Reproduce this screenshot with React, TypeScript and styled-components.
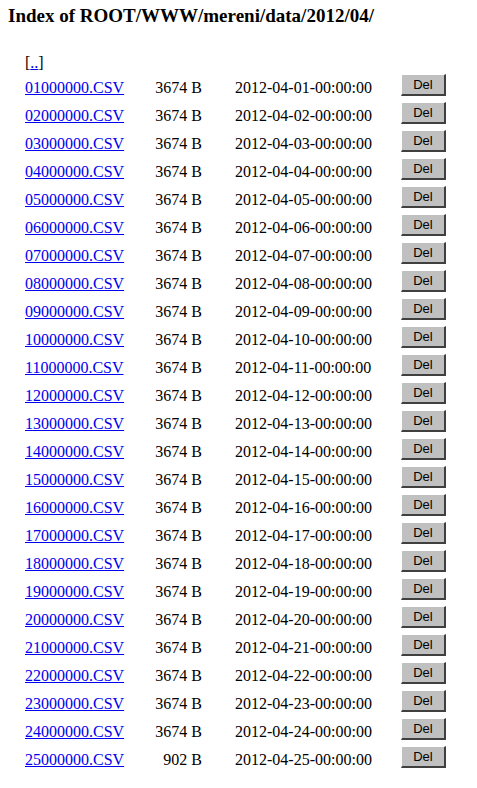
import React from "react";
import styled, { createGlobalStyle } from "styled-components";

const Global = createGlobalStyle`
  html, body { margin: 0; padding: 0; background: #fff; }
  body { font-family: "Liberation Serif", "Times New Roman", serif; font-size: 16px; color: #000; }
`;

const Page = styled.div`
  padding: 5px 8px 20px 8px;
`;

const Title = styled.h3`
  margin: 0;
  font-size: 19px;
  line-height: 22px;
  font-weight: bold;
`;

const Listing = styled.div`
  display: flex;
  flex-direction: column;
  margin-top: 25px;
  padding-left: 17px;
`;

const Row = styled.div<{ $short?: boolean }>`
  display: grid;
  grid-template-columns: 125px 52px 199px 45px;
  align-items: center;
  height: ${(p) => (p.$short ? 22 : 28)}px;
  line-height: 18px;
`;

const NameLink = styled.a`
  color: #0000ee;
  text-decoration: underline;
  white-space: nowrap;
`;

const Size = styled.span`
  text-align: right;
  white-space: nowrap;
`;

const DateCell = styled.span`
  padding-left: 33px;
  white-space: nowrap;
`;

const DelButton = styled.button`
  width: 45px;
  height: 22px;
  margin-top: -6px;
  padding: 0;
  background: #c0c0c0;
  border-style: solid;
  border-width: 1px 2px 2px 1px;
  border-color: #ffffff #404040 #404040 #ffffff;
  font-family: "Liberation Sans", Arial, sans-serif;
  font-size: 13px;
  color: #000;
  cursor: pointer;
`;

type Entry = { name: string; size: string; date: string };

const entries: Entry[] = Array.from({ length: 25 }, (_, i) => {
  const n = String(i + 1).padStart(2, "0");
  return {
    name: `${n}000000.CSV`,
    size: i === 24 ? "902 B" : "3674 B",
    date: `2012-04-${n}-00:00:00`,
  };
});

export default function App() {
  return (
    <Page>
      <Global />
      <Title>Index of ROOT/WWW/mereni/data/2012/04/</Title>
      <Listing>
        <Row $short>
          <span>
            [<NameLink href="#">..</NameLink>]
          </span>
        </Row>
        {entries.map((e) => (
          <Row key={e.name}>
            <NameLink href="#">{e.name}</NameLink>
            <Size>{e.size}</Size>
            <DateCell>{e.date}</DateCell>
            <DelButton type="button">Del</DelButton>
          </Row>
        ))}
      </Listing>
    </Page>
  );
}
